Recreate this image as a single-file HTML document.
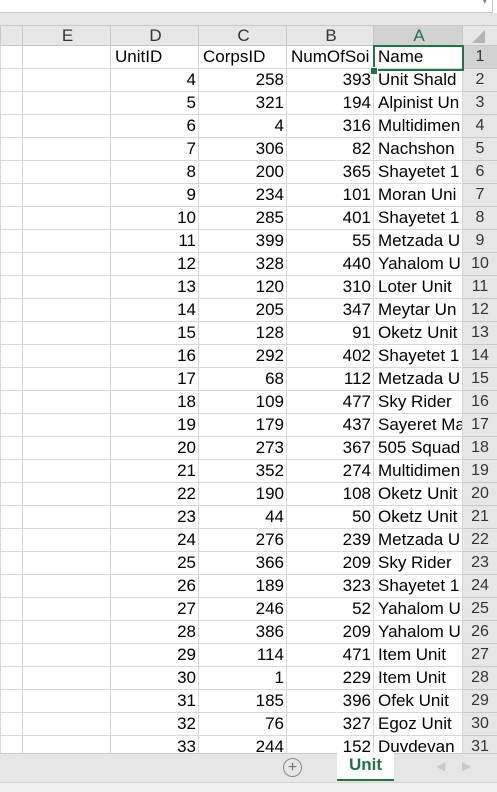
<!DOCTYPE html><html><head><style>
body{margin:0;width:497px;height:791px;overflow:hidden;background:#fff;font-family:"Liberation Sans",Arial,sans-serif;position:relative}
.top{position:absolute;left:0;top:0;width:492px;height:12px;border-bottom:1px solid #c8c8c8;border-right:1px solid #c8c8c8;background:#fff}
.gap{position:absolute;left:0;top:13px;width:497px;height:12px;background:#e6e6e6}
table{position:absolute;left:0;top:25px;border-collapse:collapse;table-layout:fixed;width:497px}
td{border:1px solid #d9d9d9;height:22px;padding:0 2px 0 4px;font-size:17px;white-space:nowrap;overflow:hidden;line-height:22px}
tr.h td{background:#e6e6e6;text-align:center;height:19px;line-height:19px;color:#333;border-color:#c8c8c8;font-size:17px}
td.n{text-align:right}
td.r{background:#e6e6e6;text-align:center;color:#333;border-color:#c8c8c8;font-size:16px;padding:0}
.sel{position:absolute;left:373px;top:45px;width:87px;height:22px;border:2px solid #217346}
.dot{position:absolute;left:370px;top:67px;width:6px;height:6px;background:#217346;border:1px solid #fff}
.tabs{position:absolute;left:0;top:753px;width:497px;height:29px;background:#e6e6e6;border-top:1px solid #c8c8c8}
.bot{position:absolute;left:0;top:782px;width:497px;height:9px;background:#f0f0f0;border-top:1px solid #d4d4d4}
.tab{position:absolute;left:337px;top:753px;width:57px;height:26px;background:#fff;border-bottom:2px solid #217346;color:#217346;font-weight:bold;font-size:17px;text-align:center;line-height:24px}
.plus{position:absolute;left:283px;top:758px;width:17px;height:17px;border:1px solid #888;border-radius:50%;color:#777;font-size:16px;text-align:center;line-height:17px}
</style></head><body>
<div class="top"><span style="position:absolute;right:5px;top:-4px;font-size:9px;color:#888">▾</span></div>
<div class="gap"></div>
<table>
<colgroup><col style="width:22px"><col style="width:88px"><col style="width:88px"><col style="width:88px"><col style="width:87px"><col style="width:89px"><col style="width:35px"></colgroup>
<tr class="h"><td></td><td>E</td><td>D</td><td>C</td><td>B</td><td style="background:#d2d2d2;color:#217346">A</td><td style="background:#e6e6e6;position:relative"><svg width="20" height="16" style="position:absolute;left:6px;top:2px"><polygon points="16,2 16,15 3,15" fill="#b4b4b4"/></svg></td></tr>
<tr><td></td><td></td><td>UnitID</td><td>CorpsID</td><td>NumOfSoi</td><td>Name</td><td class="r" style="background:#d2d2d2">1</td></tr>
<tr><td></td><td></td><td class="n">4</td><td class="n">258</td><td class="n">393</td><td>Unit Shald</td><td class="r">2</td></tr>
<tr><td></td><td></td><td class="n">5</td><td class="n">321</td><td class="n">194</td><td>Alpinist Un</td><td class="r">3</td></tr>
<tr><td></td><td></td><td class="n">6</td><td class="n">4</td><td class="n">316</td><td>Multidimen</td><td class="r">4</td></tr>
<tr><td></td><td></td><td class="n">7</td><td class="n">306</td><td class="n">82</td><td>Nachshon</td><td class="r">5</td></tr>
<tr><td></td><td></td><td class="n">8</td><td class="n">200</td><td class="n">365</td><td>Shayetet 1</td><td class="r">6</td></tr>
<tr><td></td><td></td><td class="n">9</td><td class="n">234</td><td class="n">101</td><td>Moran Uni</td><td class="r">7</td></tr>
<tr><td></td><td></td><td class="n">10</td><td class="n">285</td><td class="n">401</td><td>Shayetet 1</td><td class="r">8</td></tr>
<tr><td></td><td></td><td class="n">11</td><td class="n">399</td><td class="n">55</td><td>Metzada U</td><td class="r">9</td></tr>
<tr><td></td><td></td><td class="n">12</td><td class="n">328</td><td class="n">440</td><td>Yahalom U</td><td class="r">10</td></tr>
<tr><td></td><td></td><td class="n">13</td><td class="n">120</td><td class="n">310</td><td>Loter Unit</td><td class="r">11</td></tr>
<tr><td></td><td></td><td class="n">14</td><td class="n">205</td><td class="n">347</td><td>Meytar Un</td><td class="r">12</td></tr>
<tr><td></td><td></td><td class="n">15</td><td class="n">128</td><td class="n">91</td><td>Oketz Unit</td><td class="r">13</td></tr>
<tr><td></td><td></td><td class="n">16</td><td class="n">292</td><td class="n">402</td><td>Shayetet 1</td><td class="r">14</td></tr>
<tr><td></td><td></td><td class="n">17</td><td class="n">68</td><td class="n">112</td><td>Metzada U</td><td class="r">15</td></tr>
<tr><td></td><td></td><td class="n">18</td><td class="n">109</td><td class="n">477</td><td>Sky Rider</td><td class="r">16</td></tr>
<tr><td></td><td></td><td class="n">19</td><td class="n">179</td><td class="n">437</td><td>Sayeret Ma</td><td class="r">17</td></tr>
<tr><td></td><td></td><td class="n">20</td><td class="n">273</td><td class="n">367</td><td>505 Squad</td><td class="r">18</td></tr>
<tr><td></td><td></td><td class="n">21</td><td class="n">352</td><td class="n">274</td><td>Multidimen</td><td class="r">19</td></tr>
<tr><td></td><td></td><td class="n">22</td><td class="n">190</td><td class="n">108</td><td>Oketz Unit</td><td class="r">20</td></tr>
<tr><td></td><td></td><td class="n">23</td><td class="n">44</td><td class="n">50</td><td>Oketz Unit</td><td class="r">21</td></tr>
<tr><td></td><td></td><td class="n">24</td><td class="n">276</td><td class="n">239</td><td>Metzada U</td><td class="r">22</td></tr>
<tr><td></td><td></td><td class="n">25</td><td class="n">366</td><td class="n">209</td><td>Sky Rider</td><td class="r">23</td></tr>
<tr><td></td><td></td><td class="n">26</td><td class="n">189</td><td class="n">323</td><td>Shayetet 1</td><td class="r">24</td></tr>
<tr><td></td><td></td><td class="n">27</td><td class="n">246</td><td class="n">52</td><td>Yahalom U</td><td class="r">25</td></tr>
<tr><td></td><td></td><td class="n">28</td><td class="n">386</td><td class="n">209</td><td>Yahalom U</td><td class="r">26</td></tr>
<tr><td></td><td></td><td class="n">29</td><td class="n">114</td><td class="n">471</td><td>Item Unit</td><td class="r">27</td></tr>
<tr><td></td><td></td><td class="n">30</td><td class="n">1</td><td class="n">229</td><td>Item Unit</td><td class="r">28</td></tr>
<tr><td></td><td></td><td class="n">31</td><td class="n">185</td><td class="n">396</td><td>Ofek Unit</td><td class="r">29</td></tr>
<tr><td></td><td></td><td class="n">32</td><td class="n">76</td><td class="n">327</td><td>Egoz Unit</td><td class="r">30</td></tr>
<tr><td></td><td></td><td class="n">33</td><td class="n">244</td><td class="n">152</td><td>Duvdevan</td><td class="r">31</td></tr>
</table>
<div class="sel"></div><div class="dot"></div>
<div class="tabs"><span style="position:absolute;left:436px;top:5px;color:#c8c8c8;font-size:12px">◀</span><span style="position:absolute;left:462px;top:5px;color:#c8c8c8;font-size:12px">▶</span></div>
<div class="bot"></div>
<div class="plus">+</div>
<div class="tab">Unit</div>
</body></html>
